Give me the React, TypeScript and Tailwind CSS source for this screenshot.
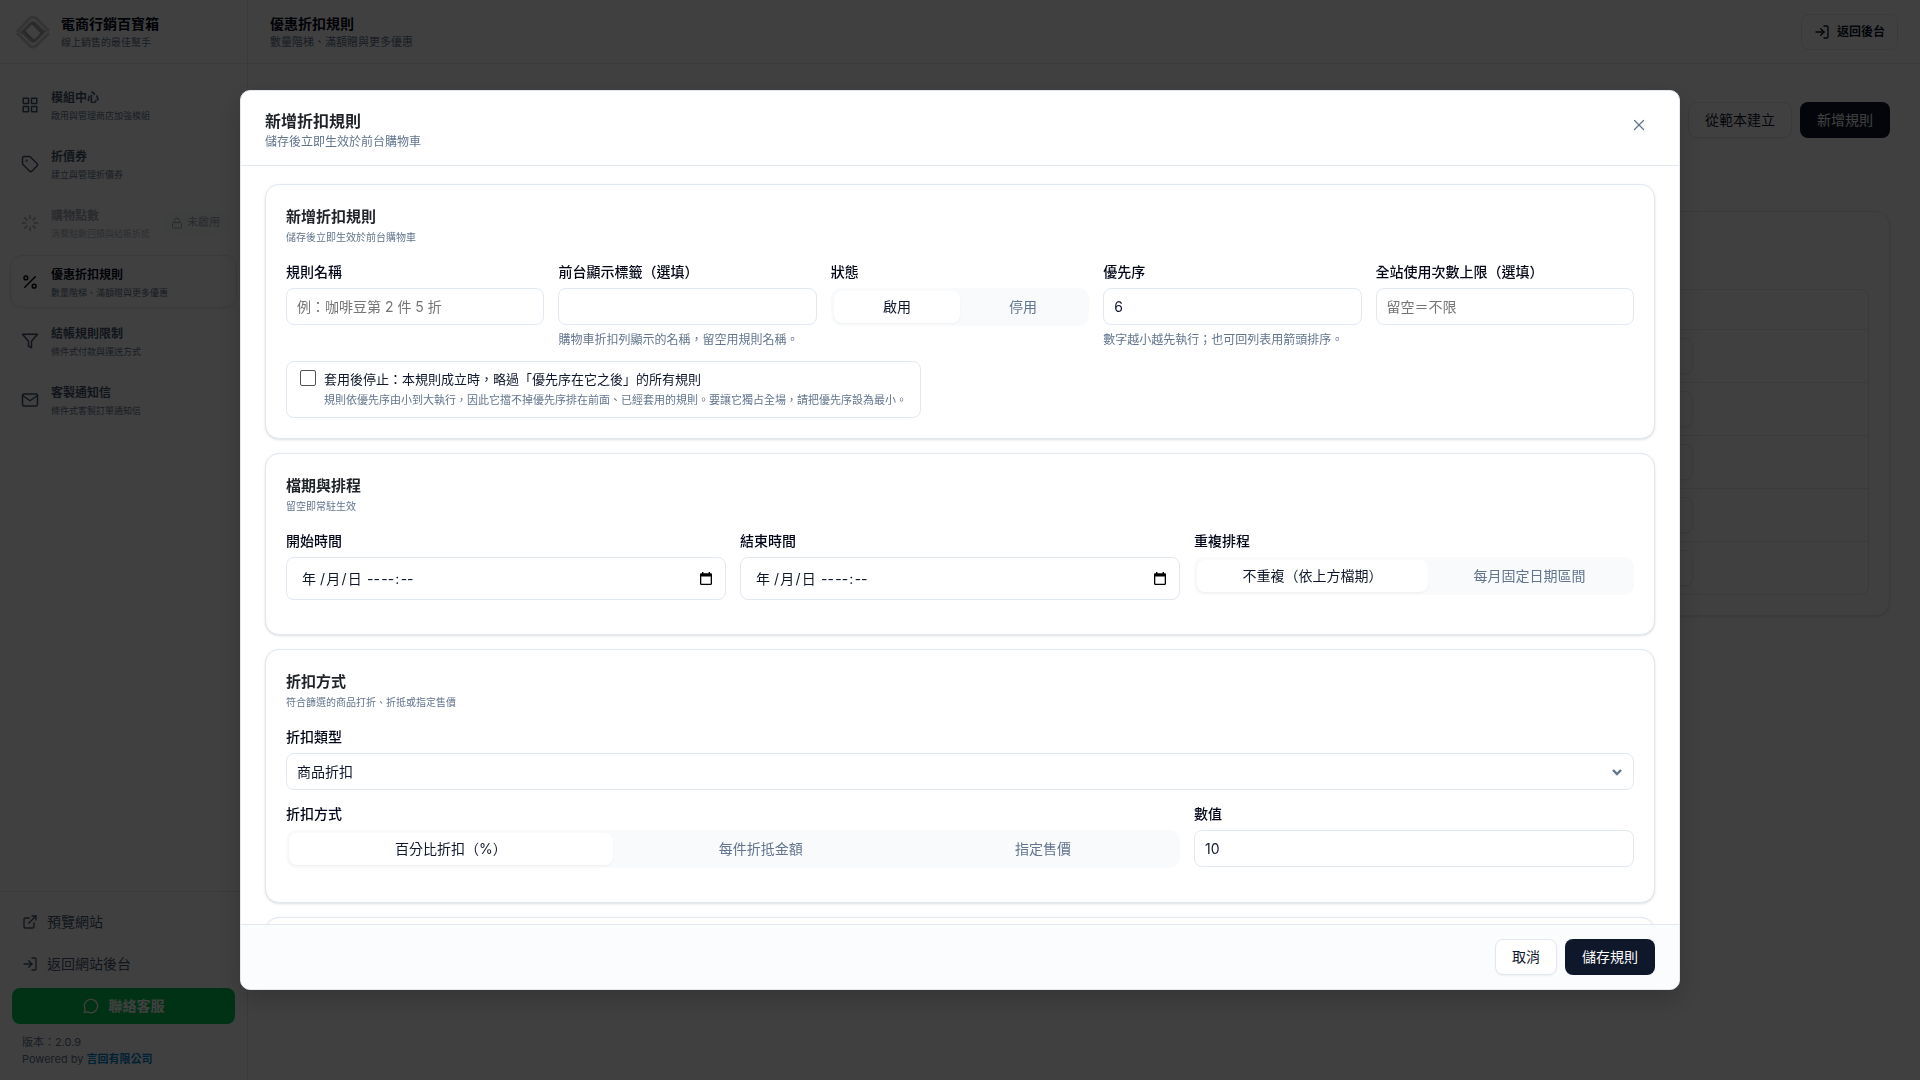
import type { ReactNode } from 'react';
import { Tag, Loader, Percent, Lock, ExternalLink, LogIn, MessageCircle, X } from 'lucide-react';
import { FiFilter, FiGrid, FiMail } from 'react-icons/fi';

const NAV_ITEMS = [
  { title: '模組中心', desc: '啟用與管理商店加強模組', icon: FiGrid },
  { title: '折價券', desc: '建立與管理折價券', icon: Tag },
  { title: '購物點數', desc: '消費點數回饋與結帳折抵', icon: Loader, disabled: true },
  { title: '優惠折扣規則', desc: '數量階梯、滿額贈與更多優惠', icon: Percent, active: true },
  { title: '結帳規則限制', desc: '條件式付款與運送方式', icon: FiFilter },
  { title: '客製通知信', desc: '條件式客製訂單通知信', icon: FiMail },
];

const RULE_ROWS = [1, 2, 3, 4, 5];

// hair spaces keep the date segments slightly apart
const DATE_PLACEHOLDER = '年 /\u200a月\u200a/\u200a日 \u200a--\u200a--\u200a:\u200a--';

const inputClass =
  'h-[37px] w-full rounded-lg border border-slate-200 bg-white px-2.5 text-sm text-slate-900 placeholder:text-[#757575]';

function Logo() {
  return (
    <svg viewBox="0 0 34 34" className="size-[34px] shrink-0" fill="none" aria-hidden="true">
      <path d="M1 17 L13.5 3.5 Q17 0.5 20.5 3.5 L33 16" stroke="#d0d0d0" strokeWidth="3" />
      <path d="M1 18 L13.5 30.5 Q17 33.5 20.5 30.5 L33 18" stroke="#d0d0d0" strokeWidth="3" />
      <path d="M5 18.5 L15 8.5 Q17 7 19 8.5 L28 17.5" stroke="#b4b4b4" strokeWidth="3" />
      <path d="M29 15.5 L19 25.5 Q17 27 15 25.5 L7 17.5" stroke="#b4b4b4" strokeWidth="3" />
      <path d="M8 16 L18 26 M26 18 L16 8" stroke="#a0a0a0" strokeWidth="2" />
    </svg>
  );
}

function Sidebar() {
  return (
    <aside className="flex w-[248px] shrink-0 flex-col border-r border-slate-200 bg-white">
      <div className="flex h-16 items-center gap-[11px] border-b border-slate-200 px-4">
        <Logo />
        <div>
          <p className="text-sm leading-5 font-bold text-slate-950">電商行銷百寶箱</p>
          <p className="text-[10px] leading-4 text-slate-500">線上銷售的最佳幫手</p>
        </div>
      </div>

      <nav className="flex flex-1 flex-col gap-1.5 px-2.5 py-3.5">
        {NAV_ITEMS.map(({ title, desc, icon: Icon, active, disabled }) => (
          <a
            key={title}
            href="#"
            className={`flex h-[53px] items-center gap-3 rounded-xl border px-2.5 ${
              active ? 'border-slate-200 bg-white shadow-xs' : 'border-transparent'
            } ${disabled ? 'opacity-50' : ''}`}
          >
            <Icon className={`size-[18px] shrink-0 ${active ? 'text-slate-950' : 'text-slate-600'}`} />
            <span className="flex-1 pt-[5px]">
              <span
                className={`block text-xs leading-[18px] font-semibold ${
                  active ? 'text-slate-950' : 'text-slate-600'
                }`}
              >
                {title}
              </span>
              <span className="block text-[9px] leading-[18px] whitespace-nowrap text-slate-500">{desc}</span>
            </span>
            {disabled && (
              <span className="flex h-6 items-center gap-1 rounded-full bg-slate-100 px-1.5 text-[11px] text-slate-600">
                <Lock className="size-3" />
                未啟用
              </span>
            )}
          </a>
        ))}
      </nav>

      <div className="border-t border-slate-200 px-3 pt-[9px] pb-3">
        <a href="#" className="flex h-[42px] items-center gap-[9px] px-2.5 text-sm text-slate-600">
          <ExternalLink className="size-4" />
          預覽網站
        </a>
        <a href="#" className="flex h-[42px] items-center gap-[9px] px-2.5 text-sm text-slate-600">
          <LogIn className="size-4" />
          返回網站後台
        </a>
        <button className="mt-[3px] flex h-9 w-full items-center justify-center gap-2.5 rounded-lg bg-[#06c755] text-sm font-semibold text-white">
          <MessageCircle className="size-4" />
          聯絡客服
        </button>
        <div className="px-2.5 pt-2.5 text-[11px] leading-[17px] text-slate-500">
          <p>版本：2.0.9</p>
          <p>
            Powered by{' '}
            <a href="#" className="font-semibold text-sky-600">
              言回有限公司
            </a>
          </p>
        </div>
      </div>
    </aside>
  );
}

function RulesPage() {
  return (
    <div className="flex min-w-0 flex-1 flex-col">
      <header className="flex h-16 items-center justify-between border-b border-slate-200 px-[22px]">
        <div>
          <h1 className="text-sm leading-5 font-bold text-slate-950">優惠折扣規則</h1>
          <p className="text-[11px] leading-4 text-slate-500">數量階梯、滿額贈與更多優惠</p>
        </div>
        <button className="flex h-9 items-center gap-[7px] rounded-lg border border-slate-200 px-3 text-xs font-semibold text-slate-900">
          <LogIn className="size-4" />
          返回後台
        </button>
      </header>

      <main className="flex-1 px-[30px] pt-[38px]">
        <div className="flex justify-end gap-2">
          <button className="h-9 rounded-lg border border-slate-200 bg-white px-4 text-sm text-slate-900 shadow-xs">
            從範本建立
          </button>
          <button className="h-9 rounded-lg bg-slate-900 px-[17px] text-sm text-white">新增規則</button>
        </div>

        <section className="mt-[73px] rounded-[14px] border border-slate-200 bg-white px-5 pt-[77px] pb-5 shadow-sm">
          <div className="overflow-hidden rounded-lg border border-slate-200">
            <div className="h-[39px]" />
            {RULE_ROWS.map((row) => (
              <div key={row} className="flex h-[53px] items-center justify-end border-t border-slate-200 pr-[175px]">
                <button
                  aria-label="編輯規則"
                  className="h-9 w-16 rounded-lg border border-slate-200 bg-white shadow-xs"
                />
              </div>
            ))}
          </div>
        </section>
      </main>
    </div>
  );
}

function Card({ title, desc, children }: { title: string; desc: string; children: ReactNode }) {
  return (
    <section className="rounded-[14px] border border-slate-200 bg-white p-5 shadow-sm">
      <h3 className="text-[15px] leading-6 font-semibold text-[#1f2328]">{title}</h3>
      <p className="text-[10px] leading-[17px] text-slate-500">{desc}</p>
      <div className="mt-4">{children}</div>
    </section>
  );
}

function Field({ id, label, hint, children }: { id: string; label: string; hint?: string; children: ReactNode }) {
  return (
    <div>
      <label htmlFor={id} className="mb-1.5 block text-sm leading-5 font-medium text-slate-950">
        {label}
      </label>
      {children}
      {hint && <p className="mt-1.5 text-xs leading-[18px] text-slate-500">{hint}</p>}
    </div>
  );
}

function Segmented({ id, label, options, className }: { id: string; label: string; options: string[]; className?: string }) {
  return (
    <div className={className}>
      <p id={id} className="mb-1.5 text-sm leading-5 font-medium text-slate-950">
        {label}
      </p>
      <div role="group" aria-labelledby={id} className="flex h-[38px] rounded-[10px] bg-slate-50 p-[3px]">
        {options.map((option, i) => (
          <button
            key={option}
            aria-pressed={i === 0}
            className={`flex-auto rounded-lg text-sm ${
              i === 0 ? 'bg-white text-slate-900 shadow-xs' : 'text-slate-500'
            }`}
          >
            {option}
          </button>
        ))}
      </div>
    </div>
  );
}

function DateField({ id, label }: { id: string; label: string }) {
  return (
    <Field id={id} label={label}>
      <div className="flex h-[43px] items-center rounded-lg border border-slate-200 bg-white pr-3 pl-[15px]">
        <input
          id={id}
          type="text"
          placeholder={DATE_PLACEHOLDER}
          className="min-w-0 flex-1 text-sm text-slate-900 placeholder:text-slate-900"
        />
        <button aria-label="選擇日期" className="text-black">
          <svg viewBox="0 0 14 14" className="size-3.5" fill="currentColor">
            <path d="M3 0h1.4v1.2h5.2V0H11v1.2h.8c.7 0 1.2.5 1.2 1.2v9.4c0 .7-.5 1.2-1.2 1.2H2.2c-.7 0-1.2-.5-1.2-1.2V2.4c0-.7.5-1.2 1.2-1.2H3zM2.3 4.5v7.2h9.4V4.5z" />
          </svg>
        </button>
      </div>
    </Field>
  );
}

function RuleDialog() {
  return (
    <div
      role="dialog"
      aria-modal="true"
      aria-labelledby="dialog-title"
      className="flex h-full max-h-[900px] w-full max-w-[1440px] flex-col overflow-hidden rounded-[10px] border border-slate-200 bg-white shadow-[0_10px_30px_rgba(0,0,0,0.2)]"
    >
      <header className="flex items-start justify-between border-b border-slate-200 px-6 pt-[18px] pb-3.5">
        <div>
          <h2 id="dialog-title" className="text-base leading-6 font-semibold text-[#1f2328]">
            新增折扣規則
          </h2>
          <p className="text-xs leading-[18px] text-slate-500">儲存後立即生效於前台購物車</p>
        </div>
        <button aria-label="關閉" className="flex size-8 items-center justify-center text-slate-500">
          <X className="size-[18px]" strokeWidth={1.75} />
        </button>
      </header>

      <div className="flex min-h-0 flex-1 flex-col gap-3.5 overflow-y-auto px-6 py-[18px] [scrollbar-width:none]">
        <Card title="新增折扣規則" desc="儲存後立即生效於前台購物車">
          <div className="grid grid-cols-5 gap-3.5">
            <Field id="rule-name" label="規則名稱">
              <input id="rule-name" className={inputClass} placeholder="例：咖啡豆第 2 件 5 折" />
            </Field>
            <Field id="rule-label" label="前台顯示標籤（選填）" hint="購物車折扣列顯示的名稱，留空用規則名稱。">
              <input id="rule-label" className={inputClass} />
            </Field>
            <Segmented id="rule-status" label="狀態" options={['啟用', '停用']} />
            <Field id="rule-priority" label="優先序" hint="數字越小越先執行；也可回列表用箭頭排序。">
              <input id="rule-priority" className={inputClass} defaultValue="6" />
            </Field>
            <Field id="rule-limit" label="全站使用次數上限（選填）">
              <input id="rule-limit" className={inputClass} placeholder="留空＝不限" />
            </Field>
          </div>
          <label
            htmlFor="rule-stop"
            className="mt-3 inline-flex items-start gap-2 rounded-lg border border-slate-200 px-[13px] py-2 align-top"
          >
            <input
              id="rule-stop"
              type="checkbox"
              className="size-4 shrink-0 appearance-none rounded-[2px] border border-neutral-600 bg-white checked:bg-slate-900"
            />
            <span>
              <span className="block text-[13px] leading-[18px] text-slate-900">
                套用後停止：本規則成立時，略過「優先序在它之後」的所有規則
              </span>
              <span className="mt-1 block text-[11px] leading-[17px] text-slate-500">
                規則依優先序由小到大執行，因此它擋不掉優先序排在前面、已經套用的規則。要讓它獨占全場，請把優先序設為最小。
              </span>
            </span>
          </label>
        </Card>

        <Card title="檔期與排程" desc="留空即常駐生效">
          <div className="mb-3.5 grid grid-cols-3 gap-3.5">
            <DateField id="start-time" label="開始時間" />
            <DateField id="end-time" label="結束時間" />
            <Segmented id="repeat" label="重複排程" options={['不重複（依上方檔期）', '每月固定日期區間']} />
          </div>
        </Card>

        <Card title="折扣方式" desc="符合篩選的商品打折、折抵或指定售價">
          <div className="mb-3.5 grid grid-cols-3 gap-3.5">
            <div className="col-span-3">
              <Field id="discount-type" label="折扣類型">
                <div className="relative">
                  <select id="discount-type" className={`${inputClass} appearance-none`}>
                    <option>商品折扣</option>
                  </select>
                  <svg
                    viewBox="0 0 10 7"
                    className="pointer-events-none absolute top-4 right-3 h-[7px] w-2.5 text-slate-500"
                    fill="none"
                    stroke="currentColor"
                    strokeWidth="2.4"
                  >
                    <path d="M1 1l4 4 4-4" />
                  </svg>
                </div>
              </Field>
            </div>
            <Segmented
              id="discount-method"
              label="折扣方式"
              options={['百分比折扣（%）', '每件折抵金額', '指定售價']}
              className="col-span-2"
            />
            <Field id="discount-value" label="數值">
              <input id="discount-value" className={inputClass} defaultValue="10" />
            </Field>
          </div>
        </Card>

        <section className="h-40 shrink-0 rounded-[14px] border border-slate-200 bg-white shadow-sm" />
      </div>

      <footer className="flex justify-end gap-2 border-t border-slate-200 bg-[#fbfcfe] px-6 py-3.5">
        <button className="h-9 rounded-lg border border-slate-200 bg-white px-4 text-sm text-slate-900 shadow-xs">
          取消
        </button>
        <button className="h-9 rounded-lg bg-slate-900 px-[17px] text-sm text-white">儲存規則</button>
      </footer>
    </div>
  );
}

export default function App() {
  return (
    <div
      lang="zh-Hant"
      className="relative flex h-screen overflow-hidden bg-white font-['Inter','Noto_Sans_CJK_TC',sans-serif] text-slate-900"
    >
      <Sidebar />
      <RulesPage />
      <div className="fixed inset-0 flex items-center justify-center bg-black/75 px-6 py-[90px]">
        <RuleDialog />
      </div>
    </div>
  );
}
